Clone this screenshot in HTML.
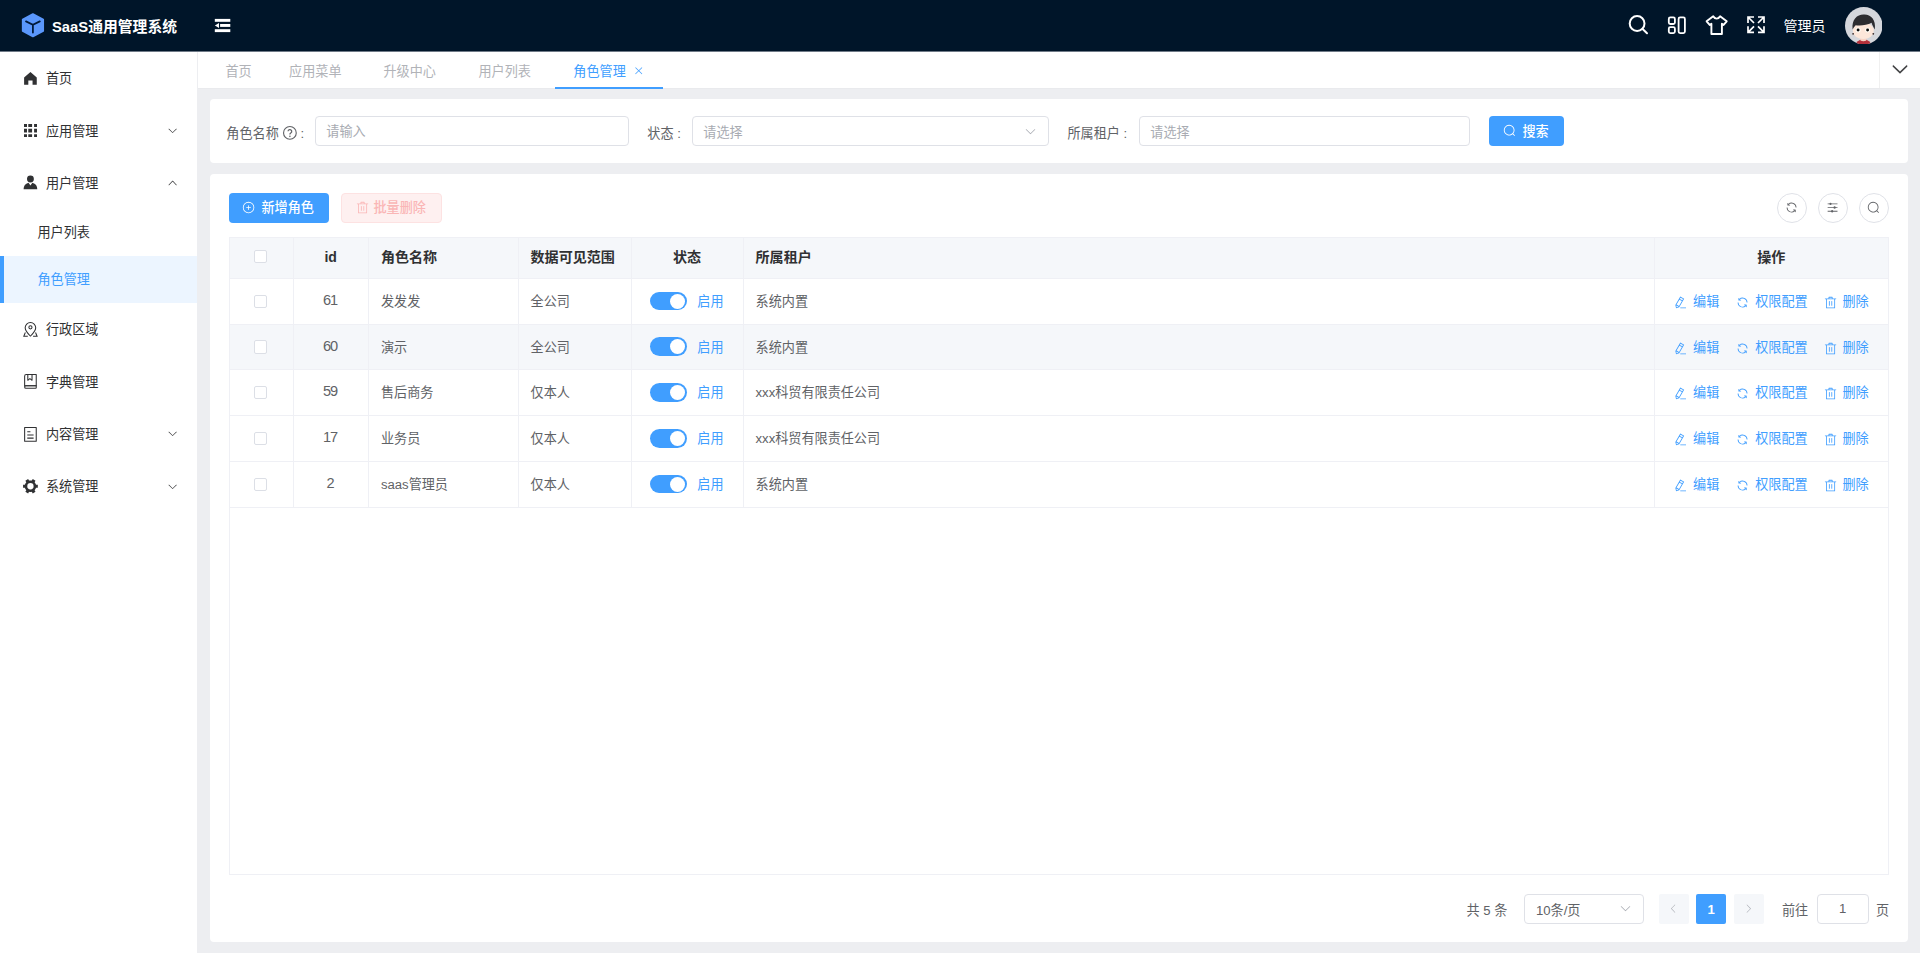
<!DOCTYPE html>
<html lang="zh-CN">
<head>
<meta charset="utf-8">
<title>SaaS通用管理系统</title>
<style>
*{box-sizing:border-box;margin:0;padding:0}
html,body{width:1920px;height:953px;overflow:hidden}
body{font-family:"Liberation Sans","Noto Sans CJK SC",sans-serif;font-size:13.125px;color:#606266;background:#edeef1;position:relative}
svg.i{position:absolute;display:block}
ul,li{list-style:none}
button{font:inherit;border:0;padding:0;margin:0;background:none;text-align:left;display:block;cursor:pointer}
/* header */
#hd{position:absolute;left:0;top:0;width:1920px;height:51px;background:#001529}
#hdl{position:absolute;left:0;top:51px;width:1920px;height:1px;background:#6f7a87;z-index:5}
#tbl{position:absolute;left:198px;top:88px;width:1722px;height:1px;background:#e9eaed}
#logo{position:absolute;left:21.3px;top:12.7px;width:22.6px;height:25px}
#title{position:absolute;left:52px;top:1px;height:51.5px;line-height:52px;font-size:14.8px;font-weight:700;color:#fff;white-space:nowrap}
#fold{position:absolute;left:214.6px;top:18.8px;width:16.2px;height:13.6px}
.hi{position:absolute}
#uname{position:absolute;left:1783.5px;top:0.7px;height:51.5px;line-height:51.5px;font-size:14px;color:#fff;white-space:nowrap}
#avatar{position:absolute;left:1844.8px;top:6.9px;width:37.5px;height:37.5px}
/* sidebar */
#sb{position:absolute;left:0;top:51.5625px;width:197px;height:902px;background:#fff}
.mi{position:absolute;left:0;width:197px;color:#303133;font-size:13.125px;white-space:nowrap}
.mi .tx{position:absolute;left:46px;top:1.2px}
.mi.sub .tx{left:37.5px;top:0.1px}
.mi.act{background:#ecf5ff;color:#409eff}
.mi.act:before{content:"";position:absolute;left:0;top:0;width:4px;height:100%;background:#409eff}
/* tabs */
#tabs{position:absolute;left:198px;top:51.5625px;width:1722px;height:36.44px;background:#fff}
.tab{position:absolute;top:1.3px;height:37.5px;line-height:38.5px;font-size:13.125px;color:#b1b3b8;white-space:nowrap}
.tab.on{color:#409eff}
#tabline{position:absolute;left:555px;top:87.2px;width:108px;height:1.875px;background:#409eff}
#tabmore{position:absolute;left:1879px;top:51.5625px;width:41px;height:36.44px;border-left:1px solid #f0f0f0;background:#fff}
/* cards */
.card{position:absolute;background:#fff;border-radius:4px}
#c1{left:210px;top:99px;width:1698px;height:64px}
#c2{left:210px;top:174px;width:1698px;height:768px}
.lbl{position:absolute;top:116.5px;height:30px;line-height:33.5px;font-size:13.125px;color:#606266;white-space:nowrap}
.inp{position:absolute;top:116px;height:30px;border:1px solid #dfe1e7;border-radius:4px;background:#fff;line-height:28.5px;padding-left:10.3px;font-size:13.125px;color:#a8abb2;white-space:nowrap}
.btn{position:absolute;height:30px;border-radius:4px;color:#fff;font-size:13.125px;line-height:30px;white-space:nowrap;font-weight:500}
.cbtn{position:absolute;width:30px;height:30px;border-radius:50%;border:1px solid #e0e2e8;background:#fff}
/* table */
#tb{position:absolute;left:229px;top:237px;width:1660px;height:638px;border:1px solid #eff0f5;overflow:hidden}
.th{position:absolute;left:0;top:0;width:1660px;height:40.85px;background:#f5f7fa;border-bottom:1px solid #eff0f5}
.tr{position:absolute;left:0;width:1660px;height:45.75px;border-bottom:1px solid #eff0f5}
.tr.st{background:#f5f7fa}
.vl{position:absolute;top:0;width:1px;height:270px;background:#eff0f5}
.c{position:absolute;top:0;height:100%;white-space:nowrap}
.th .c{line-height:39px;font-weight:700;color:#303133;font-size:14.06px}
.tr .c{line-height:45px;color:#606266}
.cb{position:absolute;left:24.3px;width:13.125px;height:13.125px;border:1px solid #dcdfe6;border-radius:2px;background:#fff}
.sw{position:absolute;left:419.7px;top:12.8px;width:37.5px;height:18.75px;border-radius:10px;background:#409eff}
.sw:after{content:"";position:absolute;right:1.9px;top:1.9px;width:15px;height:15px;border-radius:50%;background:#fff}
.tr .c.on{color:#409eff}
.tr .c.num{font-size:14.6px;letter-spacing:-1px;line-height:43.2px}
.op{position:absolute;top:0;height:100%;line-height:46px;color:#409eff;white-space:nowrap}
/* pagination */
.pg{position:absolute;top:894.5px;height:30px;line-height:31.5px;color:#606266;white-space:nowrap}
.pb{position:absolute;top:894px;width:30px;height:30px;border-radius:2px;background:#f5f7fa}
</style>
</head>
<body>

<header id="hd">
<svg class="hi" style="left:20px;top:11px" width="26" height="28" viewBox="20 11 26 28"><path d="M32.9 14.1 L43.2 19.6 V31 L32.9 36.5 L22.7 31 V19.6 Z" fill="#5a97fc" stroke="#5a97fc" stroke-width="1.7" stroke-linejoin="round"/><path d="M26 21.4 L32.9 24.8 L39.8 21.4 M32.9 24.8 V32.6" stroke="#001a3a" stroke-width="1.8" fill="none" stroke-linecap="round"/></svg>
<div id="title">SaaS通用管理系统</div>
<svg class="hi" style="left:213px;top:17px" width="20" height="17" viewBox="213 17 20 17" fill="#fff"><rect x="214.8" y="18.9" width="15.5" height="2.9"/><rect x="220.1" y="24" width="10.2" height="2.9"/><rect x="214.8" y="29.2" width="15.5" height="2.9"/><path d="M214.9 25.5 L219 22.9 V28.1 Z"/></svg>
<svg class="hi" style="left:1626px;top:12px" width="24" height="24" viewBox="1626 12 24 24" fill="none" stroke="#fff" stroke-width="2" stroke-linecap="round"><circle cx="1637.1" cy="23.5" r="7.4"/><path d="M1642.6 29 L1647 33.2"/></svg>
<svg class="hi" style="left:1666px;top:14px" width="22" height="22" viewBox="1666 14 22 22" fill="none" stroke="#fff" stroke-width="1.8"><rect x="1668.8" y="17.4" width="6.1" height="6.6" rx="1.5"/><rect x="1668.8" y="27.2" width="6.1" height="5.9" rx="1.5"/><rect x="1678.6" y="17.4" width="6.3" height="15.7" rx="1.5"/></svg>
<svg class="hi" style="left:1704px;top:13px" width="26" height="24" viewBox="1704 13 26 24" fill="none" stroke="#fff" stroke-width="1.9" stroke-linejoin="round"><path d="M1713.2 16.3 L1706.6 21.3 L1709.7 24.9 L1711.4 23.8 V34 H1721.9 V23.8 L1723.6 24.9 L1726.7 21.3 L1720.1 16.3 C1719.2 18 1718 18.6 1716.65 18.6 C1715.3 18.6 1714.1 18 1713.2 16.3 Z"/></svg>
<svg class="hi" style="left:1745px;top:14px" width="22" height="22" viewBox="1745 14 22 22" fill="none" stroke="#fff" stroke-width="1.7"><path d="M1748 23 V17 H1754 M1748 17 L1754 23 M1758 17 H1764 V23 M1764 17 L1758 23 M1748 26.3 V32.3 H1754 M1748 32.3 L1754 26.3 M1758 32.3 H1764 V26.3 M1764 32.3 L1758 26.3"/></svg>
<div id="uname">管理员</div>
<svg id="avatar" viewBox="0 0 37.5 37.5"><defs><clipPath id="avc"><circle cx="18.75" cy="18.75" r="18.75"/></clipPath></defs><g clip-path="url(#avc)"><rect width="38" height="38" fill="#d5d7dc"/><ellipse cx="18.4" cy="39.6" rx="8" ry="7.4" fill="#b3303a"/><ellipse cx="18.4" cy="32.6" rx="3.2" ry="1.6" fill="#f8d3c4"/><ellipse cx="18.3" cy="23.8" rx="10.5" ry="8.3" fill="#fde7da"/><path d="M7.6 22.5 C6.5 12 12.5 7.3 19 7.6 C25.5 7.3 31.2 12.5 29.8 22.5 C28.6 20.5 27.3 18.5 26.6 15.8 C22 18.8 13.5 18.6 10.6 18.2 C9.4 19.4 8.4 20.8 7.6 22.5Z" fill="#2c2c30"/><circle cx="13.1" cy="22.9" r="2.5" fill="#fffdf6"/><circle cx="22.6" cy="22.9" r="2.5" fill="#fffdf6"/><circle cx="13.1" cy="23" r="1.45" fill="#0c0c0c"/><circle cx="22.6" cy="23" r="1.45" fill="#0c0c0c"/><ellipse cx="8.1" cy="26.8" rx="0.9" ry="0.9" fill="#3a2a28"/><ellipse cx="28.3" cy="26.8" rx="0.9" ry="0.9" fill="#3a2a28"/></g></svg>
</header><div id="hdl"></div><div id="tbl"></div>
<aside id="sb"><ul>
<li class="mi" style="top:0.578px;height:52.32px;line-height:52.32px"><svg class="i" viewBox="0 0 1024 1024" width="16.875" height="16.875" fill="#303133" style="left:21.6px;top:17.72px"><path d="M512 128 128 447.936V896h255.936V640H640v256h255.936V447.936z"/></svg><span class="tx">首页</span></li>
<li class="mi" style="top:52.898px;height:52.32px;line-height:52.32px"><svg class="i" style="left:23.8px;top:19.6px" width="13.2" height="13.2" viewBox="0 0 13.2 13.2" fill="#303133"><path d="M0 0h3v3h-3zM4.3 0h3.8v3h-3.8zM10.1 0h3.1v3h-3.1zM0 4.8h3v3.8h-3zM4.3 4.8h3.8v3.8h-3.8zM10.1 4.8h3.1v3.8h-3.1zM0 10.2h3v3h-3zM4.3 10.2h3.8v3h-3.8zM10.1 10.2h3.1v3h-3.1z"/></svg><span class="tx">应用管理</span><svg class="i" viewBox="0 0 1024 1024" width="11.25" height="11.25" fill="#303133" style="left:167px;top:20.54px"><path d="M831.872 340.864 512 652.672 192.128 340.864a30.592 30.592 0 0 0-42.752 0 29.12 29.12 0 0 0 0 41.6L489.664 714.24a32 32 0 0 0 44.672 0l340.288-331.712a29.12 29.12 0 0 0 0-41.728 30.592 30.592 0 0 0-42.752 0z"/></svg></li>
<li class="mi" style="top:105.218px;height:52.32px;line-height:52.32px"><svg class="i" viewBox="0 0 1024 1024" width="16.875" height="16.875" fill="#303133" style="left:21.6px;top:17.72px"><path d="M628.736 528.896A416 416 0 0 1 928 928H96a415.872 415.872 0 0 1 299.264-399.104L512 704l116.736-175.104zM720 304a208 208 0 1 1-416 0 208 208 0 0 1 416 0z"/></svg><span class="tx">用户管理</span><svg class="i" viewBox="0 0 1024 1024" width="11.25" height="11.25" fill="#303133" style="left:167px;top:19.84px"><path d="m488.832 344.32-339.84 356.672a32 32 0 0 0 0 44.16l.384.384a29.44 29.44 0 0 0 42.688 0l320-335.872 319.872 335.872a29.44 29.44 0 0 0 42.688 0l.384-.384a32 32 0 0 0 0-44.16L535.168 344.32a32 32 0 0 0-46.336 0z"/></svg></li>
<li class="mi sub" style="top:157.537px;height:47.07px;line-height:47.07px"><span class="tx">用户列表</span></li>
<li class="mi sub act" style="top:204.608px;height:47.07px;line-height:47.07px"><span class="tx">角色管理</span></li>
<li class="mi" style="top:251.678px;height:52.32px;line-height:52.32px"><svg class="i" viewBox="0 0 1024 1024" width="16.875" height="16.875" fill="#303133" style="left:21.6px;top:17.72px"><path d="M800 416a288 288 0 1 0-576 0c0 118.144 94.528 272.128 288 456.576C705.472 688.128 800 534.144 800 416zM512 960C277.312 746.688 160 565.312 160 416a352 352 0 0 1 704 0c0 149.312-117.312 330.688-352 544z"/><path d="M512 448a64 64 0 1 0 0-128 64 64 0 0 0 0 128zm0 64a128 128 0 1 1 0-256 128 128 0 0 1 0 256zm345.6 192L960 960H672v-64H352v64H64l102.4-256h691.2zm-68.928 0H235.328l-76.8 192h706.944l-76.8-192z"/></svg><span class="tx">行政区域</span></li>
<li class="mi" style="top:303.998px;height:52.32px;line-height:52.32px"><svg class="i" viewBox="0 0 1024 1024" width="16.875" height="16.875" fill="#303133" style="left:21.6px;top:17.72px"><path d="M192 736h640V128H256a64 64 0 0 0-64 64v544zm64-672h608a32 32 0 0 1 32 32v672a32 32 0 0 1-32 32H160l-32 57.536V192A128 128 0 0 1 256 64z"/><path d="M240 800a48 48 0 1 0 0 96h592v-96H240zm0-64h656v160a64 64 0 0 1-64 64H240a112 112 0 0 1 0-224zm144-608v250.88l96-76.8 96 76.8V128H384zm-64-64h320v381.44a32 32 0 0 1-51.968 24.96L480 384l-108.032 86.4A32 32 0 0 1 320 445.44V64z"/></svg><span class="tx">字典管理</span></li>
<li class="mi" style="top:356.317px;height:52.32px;line-height:52.32px"><svg class="i" viewBox="0 0 1024 1024" width="16.875" height="16.875" fill="#303133" style="left:21.6px;top:17.72px"><path d="M192 128v768h640V128H192zm-32-64h704a32 32 0 0 1 32 32v832a32 32 0 0 1-32 32H160a32 32 0 0 1-32-32V96a32 32 0 0 1 32-32zm160 448h384v64H320v-64zm0-192h192v64H320v-64zm0 384h384v64H320v-64z"/></svg><span class="tx">内容管理</span><svg class="i" viewBox="0 0 1024 1024" width="11.25" height="11.25" fill="#303133" style="left:167px;top:20.54px"><path d="M831.872 340.864 512 652.672 192.128 340.864a30.592 30.592 0 0 0-42.752 0 29.12 29.12 0 0 0 0 41.6L489.664 714.24a32 32 0 0 0 44.672 0l340.288-331.712a29.12 29.12 0 0 0 0-41.728 30.592 30.592 0 0 0-42.752 0z"/></svg></li>
<li class="mi" style="top:408.637px;height:52.32px;line-height:52.32px"><svg class="i" viewBox="0 0 1024 1024" width="16.875" height="16.875" fill="#303133" style="left:21.6px;top:17.72px"><path d="M764.416 254.72a351.68 351.68 0 0 1 86.336 149.184H960v192.064H850.752a351.68 351.68 0 0 1-86.336 149.312l54.72 94.72-166.272 96-54.592-94.72a352.64 352.64 0 0 1-172.48 0L371.136 936l-166.272-96 54.72-94.72a351.68 351.68 0 0 1-86.336-149.312H64v-192h109.248a351.68 351.68 0 0 1 86.336-149.312L204.8 160l166.208-96h.192l54.656 94.592a352.64 352.64 0 0 1 172.48 0L652.8 64h.128L819.2 160l-54.72 94.72zM704 499.968a192 192 0 1 0-384 0 192 192 0 0 0 384 0z"/></svg><span class="tx">系统管理</span><svg class="i" viewBox="0 0 1024 1024" width="11.25" height="11.25" fill="#303133" style="left:167px;top:20.54px"><path d="M831.872 340.864 512 652.672 192.128 340.864a30.592 30.592 0 0 0-42.752 0 29.12 29.12 0 0 0 0 41.6L489.664 714.24a32 32 0 0 0 44.672 0l340.288-331.712a29.12 29.12 0 0 0 0-41.728 30.592 30.592 0 0 0-42.752 0z"/></svg></li>
</ul></aside>
<nav id="tabs">
<span class="tab" style="left:27.50px">首页</span>
<span class="tab" style="left:91.10px">应用菜单</span>
<span class="tab" style="left:185.50px">升级中心</span>
<span class="tab" style="left:280.50px">用户列表</span>
<span class="tab on" style="left:375.30px">角色管理</span>
<svg class="i" viewBox="0 0 1024 1024" width="11.5" height="11.5" fill="#409eff" style="left:434.60px;top:13.8px"><path d="M764.288 214.592 512 466.88 259.712 214.592a31.936 31.936 0 0 0-45.12 45.12L466.752 512 214.528 764.224a31.936 31.936 0 1 0 45.12 45.184L512 557.184l252.288 252.288a31.936 31.936 0 0 0 45.12-45.12L557.12 512.064l252.288-252.352a31.936 31.936 0 1 0-45.12-45.184z"/></svg>
</nav><div id="tabline"></div>
<div id="tabmore"><svg class="i" viewBox="0 0 1024 1024" width="20" height="20" fill="#303133" stroke="#303133" stroke-width="22" style="left:10.3px;top:7.6px"><path d="M831.872 340.864 512 652.672 192.128 340.864a30.592 30.592 0 0 0-42.752 0 29.12 29.12 0 0 0 0 41.6L489.664 714.24a32 32 0 0 0 44.672 0l340.288-331.712a29.12 29.12 0 0 0 0-41.728 30.592 30.592 0 0 0-42.752 0z"/></svg></div>
<main>
<section class="card" id="c1"></section>
<div class="lbl" style="left:226.3px">角色名称</div>
<span style="color:#606266"><svg class="i" viewBox="0 0 1024 1024" width="15.8" height="15.8" fill="#606266" style="left:282.1px;top:124.8px"><circle cx="512" cy="512" r="412" fill="none" stroke="currentColor" stroke-width="72"/><path d="M392 412a120 116 0 1 1 178 102c-38 24-58 46-58 92v16" fill="none" stroke="currentColor" stroke-width="78"/><circle cx="512" cy="736" r="50"/></svg></span>
<div class="lbl" style="left:300.5px">:</div>
<div class="inp" style="left:315px;width:313.5px;line-height:29.5px">请输入</div>
<div class="lbl" style="left:647.3px">状态 :</div>
<div class="inp" style="left:692px;width:357px;line-height:31.5px">请选择<svg class="i" viewBox="0 0 1024 1024" width="13" height="13" fill="#a8abb2" style="right:10.7px;top:7.8px"><path d="M831.872 340.864 512 652.672 192.128 340.864a30.592 30.592 0 0 0-42.752 0 29.12 29.12 0 0 0 0 41.6L489.664 714.24a32 32 0 0 0 44.672 0l340.288-331.712a29.12 29.12 0 0 0 0-41.728 30.592 30.592 0 0 0-42.752 0z"/></svg></div>
<div class="lbl" style="left:1067.5px">所属租户 :</div>
<div class="inp" style="left:1139px;width:331px;line-height:31.5px">请选择</div>
<button class="btn" style="left:1489px;top:116px;width:75px;background:#409eff"><svg class="i" viewBox="0 0 1024 1024" width="13.125" height="13.125" fill="#fff" style="left:13.6px;top:7.9px"><path d="m795.904 750.72 124.992 124.928a32 32 0 0 1-45.248 45.248L750.656 795.904a416 416 0 1 1 45.248-45.248zM480 832a352 352 0 1 0 0-704 352 352 0 0 0 0 704z"/></svg><span style="position:absolute;left:33.5px;top:0.6px">搜索</span></button>
<section class="card" id="c2"></section>
<button class="btn" style="left:229px;top:192.5px;width:100px;background:#409eff"><svg class="i" viewBox="0 0 1024 1024" width="13.125" height="13.125" fill="#fff" style="left:13.4px;top:8.7px"><path d="M352 480h320a32 32 0 1 1 0 64H352a32 32 0 0 1 0-64z"/><path d="M480 672V352a32 32 0 1 1 64 0v320a32 32 0 0 1-64 0z"/><path d="M512 896a384 384 0 1 0 0-768 384 384 0 0 0 0 768zm0 64a448 448 0 1 1 0-896 448 448 0 0 1 0 896z"/></svg><span style="position:absolute;left:32.5px;top:0">新增角色</span></button>
<button class="btn" style="left:341px;top:192.5px;width:101px;background:#fef0f0;border:1px solid #fde2e2;color:#fab6b6;line-height:28px"><svg class="i" viewBox="0 0 1024 1024" width="13.125" height="13.125" fill="#fab6b6" style="left:13.5px;top:7.6px"><path d="M160 256H96a32 32 0 0 1 0-64h256V95.936a32 32 0 0 1 32-32h256a32 32 0 0 1 32 32V192h256a32 32 0 1 1 0 64h-64v672a32 32 0 0 1-32 32H192a32 32 0 0 1-32-32V256zm448-64v-64H416v64h192zM224 896h576V256H224v640zm192-128a32 32 0 0 1-32-32V416a32 32 0 0 1 64 0v320a32 32 0 0 1-32 32zm192 0a32 32 0 0 1-32-32V416a32 32 0 0 1 64 0v320a32 32 0 0 1-32 32z"/></svg><span style="position:absolute;left:31.5px;top:0">批量删除</span></button>
<div class="cbtn" style="left:1776.6px;top:192.5px"><svg class="i" viewBox="0 0 1024 1024" width="13.125" height="13.125" fill="#606266" style="left:7.4px;top:7.4px"><path d="M771.776 794.88A384 384 0 0 1 128 512h64a320 320 0 0 0 555.712 216.448H654.72a32 32 0 1 1 0-64h149.056a32 32 0 0 1 32 32v148.928a32 32 0 1 1-64 0v-50.56zM276.288 295.616h92.992a32 32 0 0 1 0 64H220.16a32 32 0 0 1-32-32V178.56a32 32 0 0 1 64 0v50.56A384 384 0 0 1 896.128 512h-64a320 320 0 0 0-555.776-216.384z"/></svg></div>
<div class="cbtn" style="left:1817.9px;top:192.5px"><svg class="i" viewBox="0 0 1024 1024" width="13.125" height="13.125" fill="#606266" style="left:7.4px;top:7.4px"><path d="M389.44 768a96.064 96.064 0 0 1 181.12 0H896v64H570.56a96.064 96.064 0 0 1-181.12 0H128v-64h261.44zm192-288a96.064 96.064 0 0 1 181.12 0H896v64H762.56a96.064 96.064 0 0 1-181.12 0H128v-64h453.44zm-320-288a96.064 96.064 0 0 1 181.12 0H896v64H442.56a96.064 96.064 0 0 1-181.12 0H128v-64h133.44z"/></svg></div>
<div class="cbtn" style="left:1859.2px;top:192.5px"><svg class="i" viewBox="0 0 1024 1024" width="13.125" height="13.125" fill="#606266" style="left:6.9px;top:7.4px"><path d="m795.904 750.72 124.992 124.928a32 32 0 0 1-45.248 45.248L750.656 795.904a416 416 0 1 1 45.248-45.248zM480 832a352 352 0 1 0 0-704 352 352 0 0 0 0 704z"/></svg></div>
<div id="tb">
<div class="th">
<span class="cb" style="top:12.3px;left:24.3px"></span>
<span class="c" style="left:63.0px;width:75.39999999999999px;text-align:center">id</span>
<span class="c" style="left:150.95px">角色名称</span>
<span class="c" style="left:300.55px">数据可见范围</span>
<span class="c" style="left:401.0px;width:111.99999999999994px;text-align:center">状态</span>
<span class="c" style="left:525.55px">所属租户</span>
<span class="c" style="left:1423.9px;width:234.79999999999995px;text-align:center">操作</span>
</div>
<div class="tr" style="top:40.850px">
<span class="cb" style="top:15.8px;left:24.3px"></span>
<span class="c num" style="left:62.4px;width:75.39999999999999px;text-align:center">61</span>
<span class="c" style="left:150.95px">发发发</span>
<span class="c" style="left:300.55px">全公司</span>
<span class="sw"></span><span class="c on" style="left:467.3px">启用</span>
<span class="c" style="left:525.55px">系统内置</span>
<span class="op" style="left:1443.8px"><svg class="i" viewBox="0 0 1024 1024" width="13.125" height="13.125" fill="#409eff" style="left:0;top:17px"><path d="m199.04 672.64 193.984 112 224-387.968-193.92-112-224 388.032zm-23.872 60.16 32.896 148.288 144.896-45.696L175.168 732.8zM455.04 229.248l193.92 112 56.704-98.112-193.984-112-56.64 98.112zM104.32 708.8l384-665.024 304.768 175.936L409.152 884.8h.064l-248.448 78.336L104.32 708.8zm384 254.272v-64h448v64h-448z"/></svg><span style="position:absolute;left:19.3px">编辑</span></span>
<span class="op" style="left:1505.7px"><svg class="i" viewBox="0 0 1024 1024" width="13.125" height="13.125" fill="#409eff" style="left:0;top:17px"><path d="M771.776 794.88A384 384 0 0 1 128 512h64a320 320 0 0 0 555.712 216.448H654.72a32 32 0 1 1 0-64h149.056a32 32 0 0 1 32 32v148.928a32 32 0 1 1-64 0v-50.56zM276.288 295.616h92.992a32 32 0 0 1 0 64H220.16a32 32 0 0 1-32-32V178.56a32 32 0 0 1 64 0v50.56A384 384 0 0 1 896.128 512h-64a320 320 0 0 0-555.776-216.384z"/></svg><span style="position:absolute;left:19.5px">权限配置</span></span>
<span class="op" style="left:1593.7px"><svg class="i" viewBox="0 0 1024 1024" width="13.125" height="13.125" fill="#409eff" style="left:0;top:17px"><path d="M160 256H96a32 32 0 0 1 0-64h256V95.936a32 32 0 0 1 32-32h256a32 32 0 0 1 32 32V192h256a32 32 0 1 1 0 64h-64v672a32 32 0 0 1-32 32H192a32 32 0 0 1-32-32V256zm448-64v-64H416v64h192zM224 896h576V256H224v640zm192-128a32 32 0 0 1-32-32V416a32 32 0 0 1 64 0v320a32 32 0 0 1-32 32zm192 0a32 32 0 0 1-32-32V416a32 32 0 0 1 64 0v320a32 32 0 0 1-32 32z"/></svg><span style="position:absolute;left:18.8px">删除</span></span>
</div>
<div class="tr st" style="top:86.600px">
<span class="cb" style="top:15.8px;left:24.3px"></span>
<span class="c num" style="left:62.4px;width:75.39999999999999px;text-align:center">60</span>
<span class="c" style="left:150.95px">演示</span>
<span class="c" style="left:300.55px">全公司</span>
<span class="sw"></span><span class="c on" style="left:467.3px">启用</span>
<span class="c" style="left:525.55px">系统内置</span>
<span class="op" style="left:1443.8px"><svg class="i" viewBox="0 0 1024 1024" width="13.125" height="13.125" fill="#409eff" style="left:0;top:17px"><path d="m199.04 672.64 193.984 112 224-387.968-193.92-112-224 388.032zm-23.872 60.16 32.896 148.288 144.896-45.696L175.168 732.8zM455.04 229.248l193.92 112 56.704-98.112-193.984-112-56.64 98.112zM104.32 708.8l384-665.024 304.768 175.936L409.152 884.8h.064l-248.448 78.336L104.32 708.8zm384 254.272v-64h448v64h-448z"/></svg><span style="position:absolute;left:19.3px">编辑</span></span>
<span class="op" style="left:1505.7px"><svg class="i" viewBox="0 0 1024 1024" width="13.125" height="13.125" fill="#409eff" style="left:0;top:17px"><path d="M771.776 794.88A384 384 0 0 1 128 512h64a320 320 0 0 0 555.712 216.448H654.72a32 32 0 1 1 0-64h149.056a32 32 0 0 1 32 32v148.928a32 32 0 1 1-64 0v-50.56zM276.288 295.616h92.992a32 32 0 0 1 0 64H220.16a32 32 0 0 1-32-32V178.56a32 32 0 0 1 64 0v50.56A384 384 0 0 1 896.128 512h-64a320 320 0 0 0-555.776-216.384z"/></svg><span style="position:absolute;left:19.5px">权限配置</span></span>
<span class="op" style="left:1593.7px"><svg class="i" viewBox="0 0 1024 1024" width="13.125" height="13.125" fill="#409eff" style="left:0;top:17px"><path d="M160 256H96a32 32 0 0 1 0-64h256V95.936a32 32 0 0 1 32-32h256a32 32 0 0 1 32 32V192h256a32 32 0 1 1 0 64h-64v672a32 32 0 0 1-32 32H192a32 32 0 0 1-32-32V256zm448-64v-64H416v64h192zM224 896h576V256H224v640zm192-128a32 32 0 0 1-32-32V416a32 32 0 0 1 64 0v320a32 32 0 0 1-32 32zm192 0a32 32 0 0 1-32-32V416a32 32 0 0 1 64 0v320a32 32 0 0 1-32 32z"/></svg><span style="position:absolute;left:18.8px">删除</span></span>
</div>
<div class="tr" style="top:132.350px">
<span class="cb" style="top:15.8px;left:24.3px"></span>
<span class="c num" style="left:62.4px;width:75.39999999999999px;text-align:center">59</span>
<span class="c" style="left:150.95px">售后商务</span>
<span class="c" style="left:300.55px">仅本人</span>
<span class="sw"></span><span class="c on" style="left:467.3px">启用</span>
<span class="c" style="left:525.55px">xxx科贸有限责任公司</span>
<span class="op" style="left:1443.8px"><svg class="i" viewBox="0 0 1024 1024" width="13.125" height="13.125" fill="#409eff" style="left:0;top:17px"><path d="m199.04 672.64 193.984 112 224-387.968-193.92-112-224 388.032zm-23.872 60.16 32.896 148.288 144.896-45.696L175.168 732.8zM455.04 229.248l193.92 112 56.704-98.112-193.984-112-56.64 98.112zM104.32 708.8l384-665.024 304.768 175.936L409.152 884.8h.064l-248.448 78.336L104.32 708.8zm384 254.272v-64h448v64h-448z"/></svg><span style="position:absolute;left:19.3px">编辑</span></span>
<span class="op" style="left:1505.7px"><svg class="i" viewBox="0 0 1024 1024" width="13.125" height="13.125" fill="#409eff" style="left:0;top:17px"><path d="M771.776 794.88A384 384 0 0 1 128 512h64a320 320 0 0 0 555.712 216.448H654.72a32 32 0 1 1 0-64h149.056a32 32 0 0 1 32 32v148.928a32 32 0 1 1-64 0v-50.56zM276.288 295.616h92.992a32 32 0 0 1 0 64H220.16a32 32 0 0 1-32-32V178.56a32 32 0 0 1 64 0v50.56A384 384 0 0 1 896.128 512h-64a320 320 0 0 0-555.776-216.384z"/></svg><span style="position:absolute;left:19.5px">权限配置</span></span>
<span class="op" style="left:1593.7px"><svg class="i" viewBox="0 0 1024 1024" width="13.125" height="13.125" fill="#409eff" style="left:0;top:17px"><path d="M160 256H96a32 32 0 0 1 0-64h256V95.936a32 32 0 0 1 32-32h256a32 32 0 0 1 32 32V192h256a32 32 0 1 1 0 64h-64v672a32 32 0 0 1-32 32H192a32 32 0 0 1-32-32V256zm448-64v-64H416v64h192zM224 896h576V256H224v640zm192-128a32 32 0 0 1-32-32V416a32 32 0 0 1 64 0v320a32 32 0 0 1-32 32zm192 0a32 32 0 0 1-32-32V416a32 32 0 0 1 64 0v320a32 32 0 0 1-32 32z"/></svg><span style="position:absolute;left:18.8px">删除</span></span>
</div>
<div class="tr" style="top:178.100px">
<span class="cb" style="top:15.8px;left:24.3px"></span>
<span class="c num" style="left:62.4px;width:75.39999999999999px;text-align:center">17</span>
<span class="c" style="left:150.95px">业务员</span>
<span class="c" style="left:300.55px">仅本人</span>
<span class="sw"></span><span class="c on" style="left:467.3px">启用</span>
<span class="c" style="left:525.55px">xxx科贸有限责任公司</span>
<span class="op" style="left:1443.8px"><svg class="i" viewBox="0 0 1024 1024" width="13.125" height="13.125" fill="#409eff" style="left:0;top:17px"><path d="m199.04 672.64 193.984 112 224-387.968-193.92-112-224 388.032zm-23.872 60.16 32.896 148.288 144.896-45.696L175.168 732.8zM455.04 229.248l193.92 112 56.704-98.112-193.984-112-56.64 98.112zM104.32 708.8l384-665.024 304.768 175.936L409.152 884.8h.064l-248.448 78.336L104.32 708.8zm384 254.272v-64h448v64h-448z"/></svg><span style="position:absolute;left:19.3px">编辑</span></span>
<span class="op" style="left:1505.7px"><svg class="i" viewBox="0 0 1024 1024" width="13.125" height="13.125" fill="#409eff" style="left:0;top:17px"><path d="M771.776 794.88A384 384 0 0 1 128 512h64a320 320 0 0 0 555.712 216.448H654.72a32 32 0 1 1 0-64h149.056a32 32 0 0 1 32 32v148.928a32 32 0 1 1-64 0v-50.56zM276.288 295.616h92.992a32 32 0 0 1 0 64H220.16a32 32 0 0 1-32-32V178.56a32 32 0 0 1 64 0v50.56A384 384 0 0 1 896.128 512h-64a320 320 0 0 0-555.776-216.384z"/></svg><span style="position:absolute;left:19.5px">权限配置</span></span>
<span class="op" style="left:1593.7px"><svg class="i" viewBox="0 0 1024 1024" width="13.125" height="13.125" fill="#409eff" style="left:0;top:17px"><path d="M160 256H96a32 32 0 0 1 0-64h256V95.936a32 32 0 0 1 32-32h256a32 32 0 0 1 32 32V192h256a32 32 0 1 1 0 64h-64v672a32 32 0 0 1-32 32H192a32 32 0 0 1-32-32V256zm448-64v-64H416v64h192zM224 896h576V256H224v640zm192-128a32 32 0 0 1-32-32V416a32 32 0 0 1 64 0v320a32 32 0 0 1-32 32zm192 0a32 32 0 0 1-32-32V416a32 32 0 0 1 64 0v320a32 32 0 0 1-32 32z"/></svg><span style="position:absolute;left:18.8px">删除</span></span>
</div>
<div class="tr" style="top:223.850px">
<span class="cb" style="top:15.8px;left:24.3px"></span>
<span class="c num" style="left:62.4px;width:75.39999999999999px;text-align:center">2</span>
<span class="c" style="left:150.95px">saas管理员</span>
<span class="c" style="left:300.55px">仅本人</span>
<span class="sw"></span><span class="c on" style="left:467.3px">启用</span>
<span class="c" style="left:525.55px">系统内置</span>
<span class="op" style="left:1443.8px"><svg class="i" viewBox="0 0 1024 1024" width="13.125" height="13.125" fill="#409eff" style="left:0;top:17px"><path d="m199.04 672.64 193.984 112 224-387.968-193.92-112-224 388.032zm-23.872 60.16 32.896 148.288 144.896-45.696L175.168 732.8zM455.04 229.248l193.92 112 56.704-98.112-193.984-112-56.64 98.112zM104.32 708.8l384-665.024 304.768 175.936L409.152 884.8h.064l-248.448 78.336L104.32 708.8zm384 254.272v-64h448v64h-448z"/></svg><span style="position:absolute;left:19.3px">编辑</span></span>
<span class="op" style="left:1505.7px"><svg class="i" viewBox="0 0 1024 1024" width="13.125" height="13.125" fill="#409eff" style="left:0;top:17px"><path d="M771.776 794.88A384 384 0 0 1 128 512h64a320 320 0 0 0 555.712 216.448H654.72a32 32 0 1 1 0-64h149.056a32 32 0 0 1 32 32v148.928a32 32 0 1 1-64 0v-50.56zM276.288 295.616h92.992a32 32 0 0 1 0 64H220.16a32 32 0 0 1-32-32V178.56a32 32 0 0 1 64 0v50.56A384 384 0 0 1 896.128 512h-64a320 320 0 0 0-555.776-216.384z"/></svg><span style="position:absolute;left:19.5px">权限配置</span></span>
<span class="op" style="left:1593.7px"><svg class="i" viewBox="0 0 1024 1024" width="13.125" height="13.125" fill="#409eff" style="left:0;top:17px"><path d="M160 256H96a32 32 0 0 1 0-64h256V95.936a32 32 0 0 1 32-32h256a32 32 0 0 1 32 32V192h256a32 32 0 1 1 0 64h-64v672a32 32 0 0 1-32 32H192a32 32 0 0 1-32-32V256zm448-64v-64H416v64h192zM224 896h576V256H224v640zm192-128a32 32 0 0 1-32-32V416a32 32 0 0 1 64 0v320a32 32 0 0 1-32 32zm192 0a32 32 0 0 1-32-32V416a32 32 0 0 1 64 0v320a32 32 0 0 1-32 32z"/></svg><span style="position:absolute;left:18.8px">删除</span></span>
</div>
<div class="vl" style="left:63.00px"></div>
<div class="vl" style="left:138.40px"></div>
<div class="vl" style="left:288.00px"></div>
<div class="vl" style="left:401.00px"></div>
<div class="vl" style="left:513.00px"></div>
<div class="vl" style="left:1423.90px"></div>
</div>
<div class="pg" style="left:1466.5px">共 5 条</div>
<div class="inp" style="left:1524px;top:894px;width:120px;color:#606266;padding-left:11px;line-height:31px">10条/页<svg class="i" viewBox="0 0 1024 1024" width="13" height="13" fill="#a8abb2" style="right:11.5px;top:7.2px"><path d="M831.872 340.864 512 652.672 192.128 340.864a30.592 30.592 0 0 0-42.752 0 29.12 29.12 0 0 0 0 41.6L489.664 714.24a32 32 0 0 0 44.672 0l340.288-331.712a29.12 29.12 0 0 0 0-41.728 30.592 30.592 0 0 0-42.752 0z"/></svg></div>
<div class="pb" style="left:1659px"><svg class="i" viewBox="0 0 1024 1024" width="11.25" height="11.25" fill="#a8abb2" style="left:9.4px;top:9.4px"><path d="M609.408 149.376 277.76 489.6a32 32 0 0 0 0 44.672l331.648 340.352a29.12 29.12 0 0 0 41.728 0 30.592 30.592 0 0 0 0-42.752L339.264 511.936l311.872-319.872a30.592 30.592 0 0 0 0-42.688 29.12 29.12 0 0 0-41.728 0z"/></svg></div>
<div class="pb" style="left:1696.2px;background:#409eff;color:#fff;text-align:center;line-height:31px;font-weight:700;font-size:13.125px">1</div>
<div class="pb" style="left:1734px"><svg class="i" viewBox="0 0 1024 1024" width="11.25" height="11.25" fill="#a8abb2" style="left:9.4px;top:9.4px"><path d="M340.864 149.312a30.592 30.592 0 0 0 0 42.752L652.736 512 340.864 831.872a30.592 30.592 0 0 0 0 42.752 29.12 29.12 0 0 0 41.728 0L714.24 534.336a32 32 0 0 0 0-44.672L382.592 149.376a29.12 29.12 0 0 0-41.728 0z"/></svg></div>
<div class="pg" style="left:1782px">前往</div>
<div class="inp" style="left:1816.5px;top:894px;width:52.5px;color:#606266;padding:0;text-align:center">1</div>
<div class="pg" style="left:1876px">页</div>
</main>
</body></html>
